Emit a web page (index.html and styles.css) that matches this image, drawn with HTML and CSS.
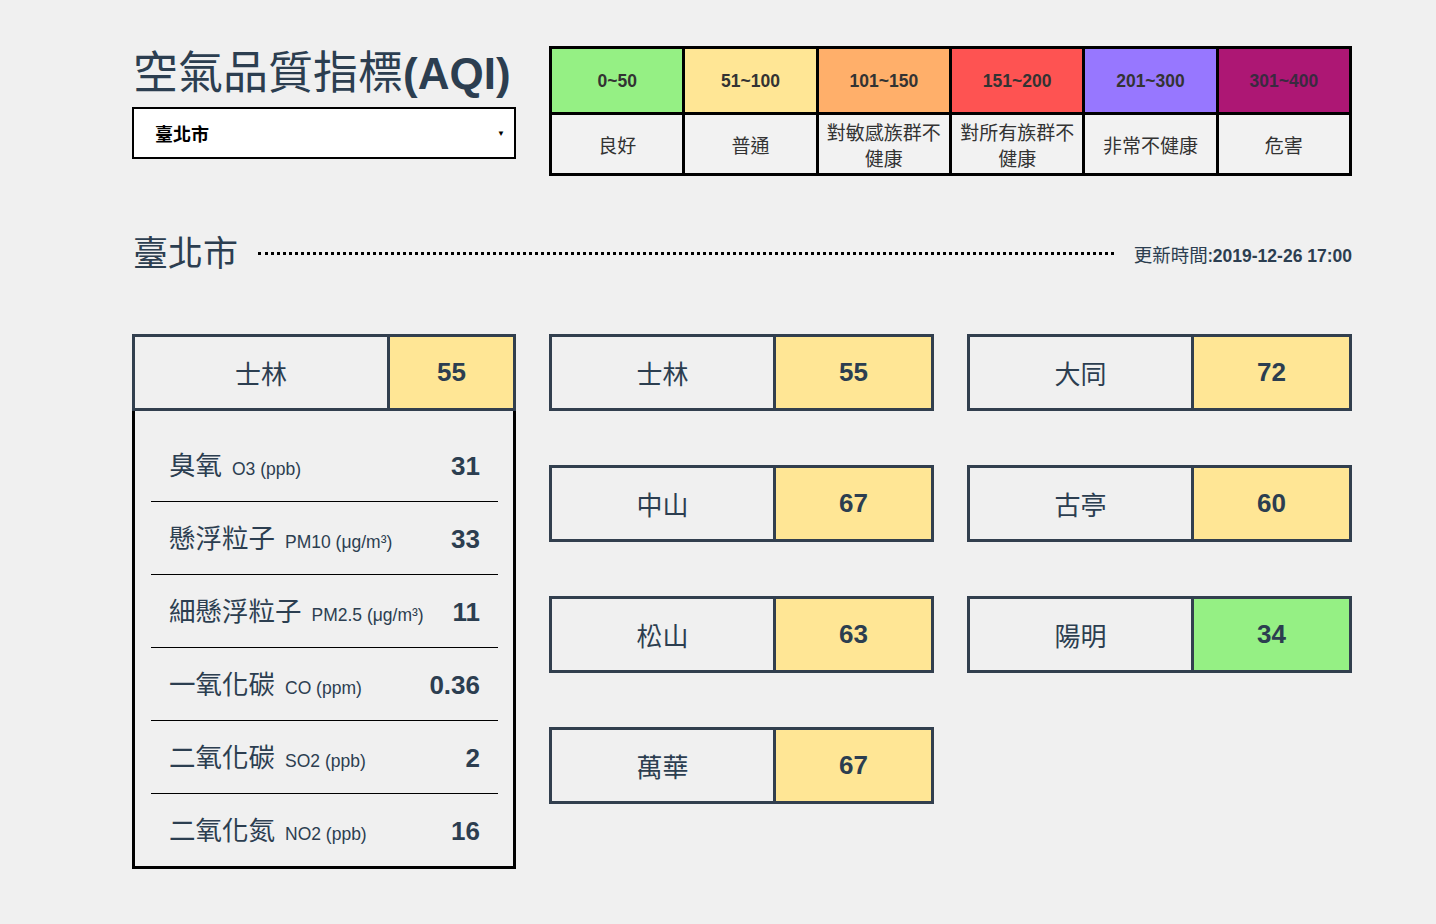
FILE: index.html
```html
<!DOCTYPE html>
<html lang="zh-Hant">
<head>
<meta charset="utf-8">
<title>空氣品質指標(AQI)</title>
<link rel="stylesheet" href="styles.css">
</head>
<body>
<div class="page">
  <header class="top">
    <div class="brand">
      <h1 class="title">空氣品質指標<span class="title-en">(AQI)</span></h1>
      <div class="select"><span class="select-text">臺北市</span><span class="select-arrow">▼</span></div>
    </div>
    <div class="legend">
      <div class="lg-num c1">0~50</div>
      <div class="lg-num c2">51~100</div>
      <div class="lg-num c3">101~150</div>
      <div class="lg-num c4">151~200</div>
      <div class="lg-num c5">201~300</div>
      <div class="lg-num c6">301~400</div>
      <div class="lg-txt">良好</div>
      <div class="lg-txt">普通</div>
      <div class="lg-txt">對敏感族群不<br>健康</div>
      <div class="lg-txt">對所有族群不<br>健康</div>
      <div class="lg-txt">非常不健康</div>
      <div class="lg-txt">危害</div>
    </div>
  </header>

  <section class="city-head">
    <h2 class="city-name">臺北市</h2>
    <div class="dots"></div>
    <div class="updated">更新時間:<b>2019-12-26 17:00</b></div>
  </section>

  <main class="grid">
    <div class="col">
      <div class="card card-main">
        <div class="card-name">士林</div>
        <div class="card-val good2">55</div>
      </div>
      <div class="detail">
        <div class="row"><span class="lab">臭氧</span><span class="sub">O3 (ppb)</span><span class="val">31</span></div>
        <div class="row"><span class="lab">懸浮粒子</span><span class="sub">PM10 (μg/m³)</span><span class="val">33</span></div>
        <div class="row"><span class="lab">細懸浮粒子</span><span class="sub">PM2.5 (μg/m³)</span><span class="val">11</span></div>
        <div class="row"><span class="lab">一氧化碳</span><span class="sub">CO (ppm)</span><span class="val">0.36</span></div>
        <div class="row"><span class="lab">二氧化碳</span><span class="sub">SO2 (ppb)</span><span class="val">2</span></div>
        <div class="row"><span class="lab">二氧化氮</span><span class="sub">NO2 (ppb)</span><span class="val">16</span></div>
      </div>
    </div>
    <div class="col stack">
      <div class="card"><div class="card-name">士林</div><div class="card-val good2">55</div></div>
      <div class="card"><div class="card-name">中山</div><div class="card-val good2">67</div></div>
      <div class="card"><div class="card-name">松山</div><div class="card-val good2">63</div></div>
      <div class="card"><div class="card-name">萬華</div><div class="card-val good2">67</div></div>
    </div>
    <div class="col stack">
      <div class="card"><div class="card-name">大同</div><div class="card-val good2">72</div></div>
      <div class="card"><div class="card-name">古亭</div><div class="card-val good2">60</div></div>
      <div class="card"><div class="card-name">陽明</div><div class="card-val good1">34</div></div>
    </div>
  </main>
</div>
</body>
</html>
```

FILE: styles.css
```css
* { box-sizing: border-box; }
html, body { margin: 0; padding: 0; }
body {
  background: #f0f0f0;
  color: #2c3e50;
  font-family: "Liberation Sans", Arial, "Noto Sans CJK TC", sans-serif;
}
.page {
  width: 1220px;
  margin-left: 132px;
  padding-top: 46px;
  padding-bottom: 40px;
}
.top {
  display: grid;
  grid-template-columns: 384px 385px 385px;
  column-gap: 33px;
  align-items: start;
}
.brand { grid-column: 1; }
.title {
  margin: 1px 0 0 1px;
  height: 49px;
  font-size: 45px;
  line-height: 45px;
  font-weight: 400;
  font-family: "Noto Sans CJK TC", sans-serif;
  color: #2c3e50;
  white-space: nowrap;
}
.title-en {
  font-family: "Liberation Sans", Arial, sans-serif;
  font-weight: 700;
  font-size: 44px;
}
.select {
  margin-top: 11px;
  height: 52px;
  width: 384px;
  border: 2px solid #000;
  background: #fff;
  display: flex;
  align-items: center;
  justify-content: space-between;
  padding: 0 9px 0 21px;
  color: #000;
}
.select-text {
  font-family: "Noto Sans CJK TC", sans-serif;
  font-size: 18px;
  font-weight: 700;
}
.select-arrow { font-size: 8px; }
.legend {
  grid-column: 2 / span 2;
  display: grid;
  grid-template-columns: repeat(6, 1fr);
  grid-template-rows: 63px 58px;
  gap: 3px;
  padding: 3px;
  background: #000;
  height: 130px;
}
.lg-num {
  display: flex;
  align-items: center;
  justify-content: center;
  font-weight: 700;
  font-size: 17.5px;
  color: #333;
  padding-top: 1px;
}
.c1 { background: #95f084; }
.c2 { background: #ffe695; }
.c3 { background: #ffaf6a; }
.c4 { background: #fe5352; }
.c5 { background: #9777ff; }
.c6 { background: #ad1774; color: #3a2a40; }
.lg-txt {
  background: #f2f2f2;
  display: flex;
  align-items: center;
  justify-content: center;
  text-align: center;
  font-family: "Noto Sans CJK TC", sans-serif;
  font-size: 19px;
  line-height: 26px;
  color: #333;
  padding-top: 2px;
}
.city-head {
  display: flex;
  align-items: center;
  margin-top: 55px;
  height: 40px;
}
.city-name {
  margin: 0 0 0 1px;
  font-family: "Noto Sans CJK TC", sans-serif;
  font-weight: 400;
  font-size: 35px;
  line-height: 40px;
  color: #2c3e50;
}
.dots {
  flex: 1;
  margin: 4px 20px 0 20px;
  border-bottom: 3px dotted #000;
}
.updated {
  font-family: "Noto Sans CJK TC", sans-serif;
  font-size: 18.5px;
  color: #2c3e50;
  padding-top: 6px;
}
.updated b {
  font-family: "Liberation Sans", Arial, sans-serif;
  font-weight: 700;
  font-size: 17.5px;
}
.grid {
  margin-top: 63px;
  display: grid;
  grid-template-columns: 384px 385px 385px;
  column-gap: 33px;
  align-items: start;
}
.stack {
  display: flex;
  flex-direction: column;
  gap: 54px;
}
.card {
  height: 77px;
  border: 3px solid #323f4e;
  display: grid;
  grid-template-columns: 7fr 5fr;
  background: #f0f0f0;
}
.card-main { grid-template-columns: 2fr 1fr; }
.card-name {
  display: flex;
  align-items: center;
  justify-content: center;
  font-family: "Noto Sans CJK TC", sans-serif;
  font-size: 26px;
  color: #2c3e50;
}
.card-val {
  border-left: 3px solid #323f4e;
  display: flex;
  align-items: center;
  justify-content: center;
  font-weight: 700;
  font-size: 26px;
  color: #2c3e50;
}
.good1 { background: #95f084; }
.good2 { background: #ffe695; }
.detail {
  border: 3px solid #000;
  border-top: none;
  padding: 18px 15px 0 16px;
  height: 458px;
}
.row {
  height: 73px;
  border-bottom: 1px solid #000;
  display: flex;
  align-items: baseline;
  padding: 20px 18px 0 18px;
}
.row:last-child { border-bottom: none; }
.lab {
  font-family: "Noto Sans CJK TC", sans-serif;
  font-size: 26.5px;
  line-height: 30px;
  color: #2c3e50;
  margin-right: 10px;
}
.sub {
  font-size: 17.5px;
  color: #2c3e50;
  flex: 1;
}
.val {
  font-weight: 700;
  font-size: 26px;
  color: #2c3e50;
}
```
